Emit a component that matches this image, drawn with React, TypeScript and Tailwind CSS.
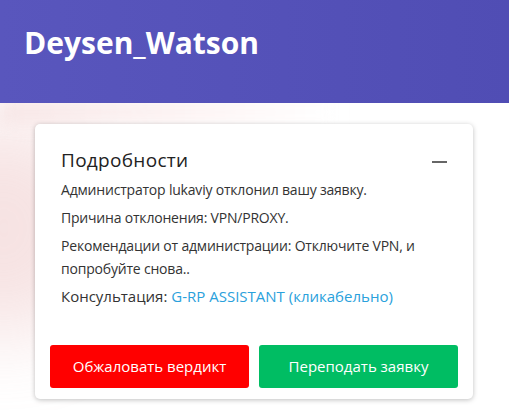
const details = [
  "Администратор lukaviy отклонил вашу заявку.",
  "Причина отклонения: VPN/PROXY.",
  "Рекомендации от администрации: Отключите VPN, и попробуйте снова..",
];

export default function App() {
  return (
    <div className="relative min-h-[410px] overflow-hidden bg-white font-['Open_Sans',sans-serif]">
      {/* soft backdrop behind the card */}
      <div className="pointer-events-none absolute -left-24 top-[118px] h-[220px] w-[200px] rounded-full bg-[#e9b8b8] opacity-40 blur-2xl" />
      <div className="pointer-events-none absolute left-0 top-[100px] h-[24px] w-[340px] bg-gradient-to-r from-[#f6e3e3] via-[#fbeeee] to-white opacity-80 blur-sm" />

      <header className="relative flex h-[103px] items-center bg-gradient-to-r from-[#5956bd] to-[#504db4] px-6">
        <h1 className="-mt-[18px] text-[30px] font-bold leading-none text-white">
          Deysen_Watson
        </h1>
      </header>

      <div className="relative mx-[35px] mt-[21px] w-[438px] rounded-[5px] bg-white shadow-[0_1px_5px_rgba(0,0,0,0.25)]">
        <div className="px-[26px] pt-[23px]">
          <div className="flex items-center justify-between">
            <h2 className="text-[19px] leading-[26px] tracking-[0.3px] text-[#222]">
              Подробности
            </h2>
            <span className="mt-[3px] block h-[2px] w-[15px] bg-[#666]" />
          </div>
          <div className="mt-[5px] text-[14px] leading-[23px] tracking-[-0.2px] text-[#333]">
            {details.map((line) => (
              <p key={line} className="mb-[5px]">
                {line}
              </p>
            ))}
            <p className="text-[15px] tracking-normal">
              Консультация:{" "}
              <a href="#" className="text-[#2aa1dc]">
                G-RP ASSISTANT (кликабельно)
              </a>
            </p>
          </div>
        </div>
        <div className="mt-[37px] flex gap-[10px] px-[15px] pb-[11px]">
          <button className="h-[43px] w-[200px] rounded-[3px] bg-[#ff0000] text-[15px] text-white">
            Обжаловать вердикт
          </button>
          <button className="h-[43px] w-[200px] rounded-[3px] bg-[#00bd63] text-[15px] text-white">
            Переподать заявку
          </button>
        </div>
      </div>
    </div>
  );
}
